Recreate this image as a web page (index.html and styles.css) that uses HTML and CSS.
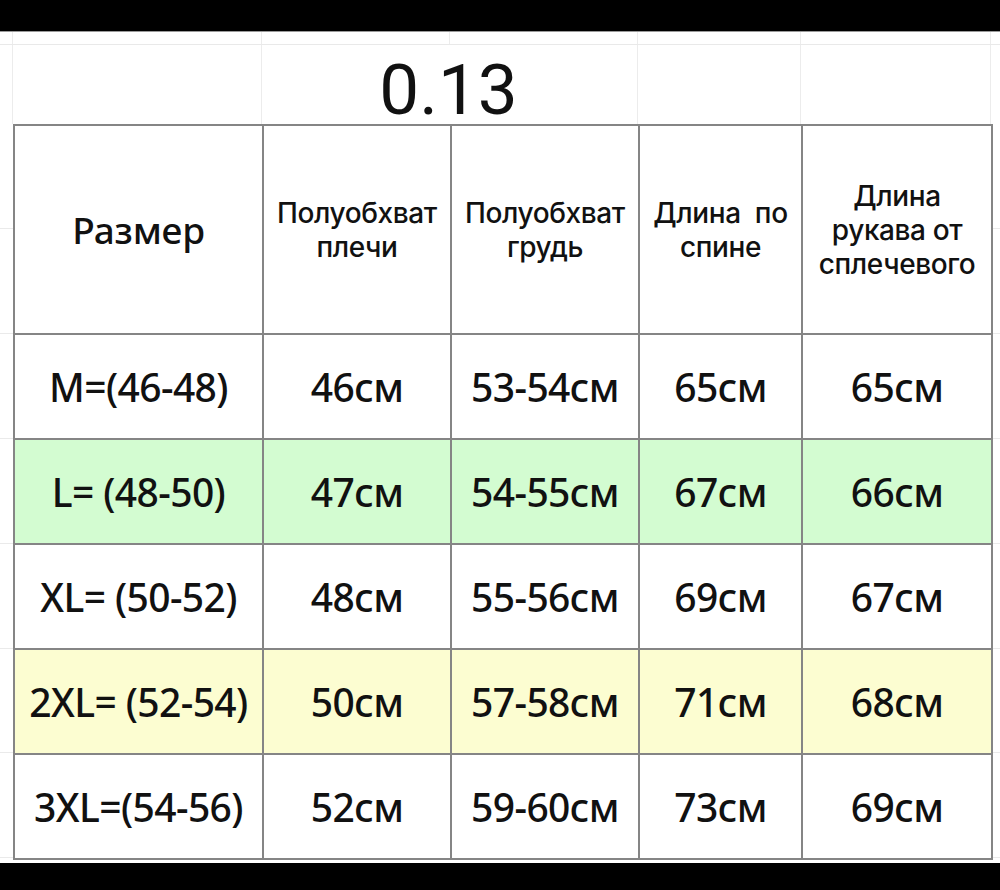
FILE: index.html
```html
<!DOCTYPE html>
<html lang="ru">
<head>
<meta charset="utf-8">
<title>Размерная сетка 0.13</title>
<link rel="stylesheet" href="styles.css">
</head>
<body>
<div class="bar bar-top"></div>
<main class="sheet">
  <div class="strip">
    <div class="gc"></div><div class="gc"></div><div class="gc"></div><div class="gc"></div><div class="gc"></div><div class="gc"></div><div class="gc last"></div>
  </div>
  <div class="title-row">
    <div class="gc"></div>
    <div class="gc"></div>
    <div class="gc title-cell"><span class="title">0.13</span></div>
    <div class="gc"></div>
    <div class="gc"></div>
    <div class="gc last"></div>
  </div>
  <div class="table-wrap">
    <table class="sizes">
      <colgroup>
        <col class="c1"><col class="c2"><col class="c3"><col class="c4"><col class="c5">
      </colgroup>
      <thead>
        <tr>
          <th class="big">Размер</th>
          <th><span class="ln">Полуобхват</span><span class="ln">плечи</span></th>
          <th><span class="ln">Полуобхват</span><span class="ln">грудь</span></th>
          <th><span class="ln">Длина&nbsp; по</span><span class="ln">спине</span></th>
          <th><span class="ln">Длина</span><span class="ln">рукава от</span><span class="ln">сплечевого</span></th>
        </tr>
      </thead>
      <tbody>
        <tr><td>M=(46-48)</td><td>46см</td><td>53-54см</td><td>65см</td><td>65см</td></tr>
        <tr class="green"><td>L= (48-50)</td><td>47см</td><td>54-55см</td><td>67см</td><td>66см</td></tr>
        <tr><td>XL= (50-52)</td><td>48см</td><td>55-56см</td><td>69см</td><td>67см</td></tr>
        <tr class="yellow"><td>2XL= (52-54)</td><td>50см</td><td>57-58см</td><td>71см</td><td>68см</td></tr>
        <tr><td>3XL=(54-56)</td><td>52см</td><td>59-60см</td><td>73см</td><td>69см</td></tr>
      </tbody>
    </table>
  </div>
</main>
<div class="bar bar-bottom"></div>
</body>
</html>
```

FILE: styles.css
```css
html, body {
  margin: 0;
  padding: 0;
  background: #ffffff;
}
body {
  width: 1000px;
  height: 890px;
  overflow: hidden;
  font-family: "Noto Sans", "Liberation Sans", sans-serif;
  color: #111;
}
.bar {
  background: #000;
}
.bar-top {
  height: 32px;
  border-bottom: 1px solid #9a9a9a;
  box-sizing: border-box;
}
.bar-bottom {
  height: 27px;
}
.sheet {
  height: 831px;
  background: #fff;
}
.strip,
.title-row {
  display: grid;
  grid-template-columns: 13px 249px 188px 188px 163px 190px 9px;
}
.strip {
  height: 13px;
  border-bottom: 1px solid #e9e9e9;
  box-sizing: border-box;
}
.title-row {
  grid-template-columns: 13px 249px 376px 163px 190px 9px;
  height: 79px;
}
.gc {
  border-right: 1px solid #ececec;
  box-sizing: border-box;
}
.gc.last {
  border-right: none;
}
.title-cell {
  display: flex;
  justify-content: center;
  padding-top: 11px;
  padding-right: 2px;
  box-sizing: border-box;
}
.title {
  font-family: Roboto, "Liberation Sans", sans-serif;
  font-weight: 400;
  font-size: 71px;
  line-height: 68px;
  color: #111;
}
.table-wrap {
  padding: 0 9px 0 13px;
  height: 739px;
  box-sizing: border-box;
  background-image:
    linear-gradient(#eaeaea, #eaeaea),
    linear-gradient(#eaeaea, #eaeaea),
    linear-gradient(#eaeaea, #eaeaea),
    linear-gradient(#eaeaea, #eaeaea),
    linear-gradient(#eaeaea, #eaeaea),
    linear-gradient(#eaeaea, #eaeaea),
    linear-gradient(#eaeaea, #eaeaea);
  background-repeat: no-repeat;
  background-size: 100% 1px;
  background-position:
    0 104px, 0 209px, 0 314px, 0 419px, 0 524px, 0 628px, 0 733px;
}
.sizes {
  border-collapse: collapse;
  table-layout: fixed;
  width: 978px;
  background: #fff;
}
.c1 { width: 249px; }
.c2 { width: 188px; }
.c3 { width: 188px; }
.c4 { width: 163px; }
.c5 { width: 190px; }
.sizes th,
.sizes td {
  border: 2px solid #858585;
  padding: 0;
  text-align: center;
  vertical-align: middle;
  color: #111;
}
.sizes th {
  height: 207px;
  font-family: Inter, "Noto Sans", sans-serif;
  font-weight: 500;
  font-size: 28px;
  line-height: 34px;
  letter-spacing: -0.4px;
  white-space: nowrap;
}
.ln {
  display: block;
  height: 34px;
}
.sizes th.big {
  font-family: "Noto Sans", "Liberation Sans", sans-serif;
  font-size: 37px;
  letter-spacing: -0.2px;
}
.sizes td {
  height: 103px;
  font-weight: 500;
  font-size: 39px;
  letter-spacing: -0.6px;
  white-space: nowrap;
}
.green td {
  background: #d3fcd1;
}
.yellow td {
  background: #fcfdd1;
}
```
